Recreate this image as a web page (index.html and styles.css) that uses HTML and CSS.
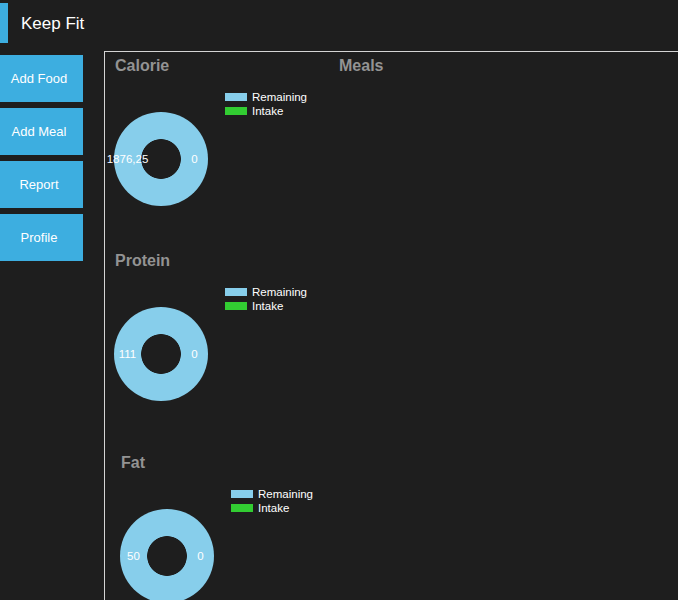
FILE: index.html
```html
<!DOCTYPE html>
<html>
<head>
<meta charset="utf-8">
<link rel="stylesheet" href="styles.css">
</head>
<body>
<header class="header">
  <div class="brand-bar"></div>
  <div class="brand">Keep Fit</div>
</header>
<div class="main">
  <nav class="sidebar">
    <button class="nav-btn">Add Food</button>
    <button class="nav-btn">Add Meal</button>
    <button class="nav-btn">Report</button>
    <button class="nav-btn">Profile</button>
  </nav>
  <section class="panel">
    <div class="col-charts">
      <div class="chart-section">
        <div class="title-row">
          <h2 class="title">Calorie</h2>
          <h2 class="title meals">Meals</h2>
        </div>
        <div class="chart">
          <div class="donut">
            <div class="slot"><span>1876,25</span></div>
            <div class="slot"><span>0</span></div>
          </div>
          <ul class="legend">
            <li><i class="sw remaining"></i>Remaining</li>
            <li><i class="sw intake"></i>Intake</li>
          </ul>
        </div>
      </div>
      <div class="chart-section">
        <div class="title-row">
          <h2 class="title">Protein</h2>
        </div>
        <div class="chart">
          <div class="donut">
            <div class="slot"><span>111</span></div>
            <div class="slot"><span>0</span></div>
          </div>
          <ul class="legend">
            <li><i class="sw remaining"></i>Remaining</li>
            <li><i class="sw intake"></i>Intake</li>
          </ul>
        </div>
      </div>
      <div class="chart-section fat">
        <div class="title-row">
          <h2 class="title">Fat</h2>
        </div>
        <div class="chart">
          <div class="donut">
            <div class="slot"><span>50</span></div>
            <div class="slot"><span>0</span></div>
          </div>
          <ul class="legend">
            <li><i class="sw remaining"></i>Remaining</li>
            <li><i class="sw intake"></i>Intake</li>
          </ul>
        </div>
      </div>
    </div>
  </section>
</div>
</body>
</html>
```
FILE: styles.css
```css
html, body {
  margin: 0;
  padding: 0;
  background: #1e1e1e;
  overflow: hidden;
  height: 600px;
}
body {
  font-family: "Liberation Sans", Arial, sans-serif;
  color: #ffffff;
}
.header {
  display: flex;
  align-items: center;
  height: 51px;
}
.brand-bar {
  width: 8px;
  height: 40px;
  margin-top: -5px;
  background: #3daee0;
}
.brand {
  margin-left: 13px;
  margin-top: -4px;
  font-size: 17px;
  color: #ffffff;
}
.main {
  display: flex;
  align-items: flex-start;
  height: 549px;
  overflow: hidden;
}
.sidebar {
  display: flex;
  flex-direction: column;
  gap: 6px;
  padding-top: 4px;
  width: 83px;
  flex-shrink: 0;
}
.nav-btn {
  height: 47px;
  width: 83px;
  border: none;
  background: #3daee0;
  color: #ffffff;
  font-family: "Liberation Sans", Arial, sans-serif;
  font-size: 13px;
  padding: 0 5px 0 0;
  margin: 0;
}
.panel {
  margin-left: 21px;
  width: 573px;
  height: 548px;
  flex-shrink: 0;
  border: 1px solid #d4d4d4;
  border-right: none;
  border-bottom: none;
  overflow: hidden;
}
.chart-section {
  height: 195px;
}
.chart-section.fat {
  margin-top: 7px;
  padding-left: 6px;
}
.title-row {
  display: flex;
  padding-top: 4px;
  padding-left: 10px;
}
.title {
  margin: 0;
  font-size: 16px;
  font-weight: bold;
  line-height: 19px;
  color: #939393;
  width: 224px;
}
.title.meals {
  width: auto;
}
.chart {
  display: flex;
  align-items: flex-start;
  padding-left: 9px;
}
.donut {
  margin-top: 37px;
  width: 94px;
  height: 94px;
  border-radius: 50%;
  background: radial-gradient(circle, #1e1e1e 0, #1e1e1e 19.5px, #87ceeb 20.2px);
  display: flex;
  justify-content: space-between;
  align-items: center;
  flex-shrink: 0;
}
.slot {
  width: 27px;
  display: flex;
  justify-content: center;
  font-size: 11.5px;
  color: #ffffff;
  white-space: nowrap;
}
.slot span {
  flex-shrink: 0;
}
.legend {
  list-style: none;
  margin: 15px 0 0 17px;
  padding: 0;
  font-size: 11.5px;
  line-height: 14px;
}
.legend li {
  display: flex;
  align-items: center;
}
.sw {
  display: inline-block;
  width: 22px;
  height: 8px;
  margin-right: 5px;
}
.sw.remaining { background: #87ceeb; }
.sw.intake { background: #32cd32; }
```
